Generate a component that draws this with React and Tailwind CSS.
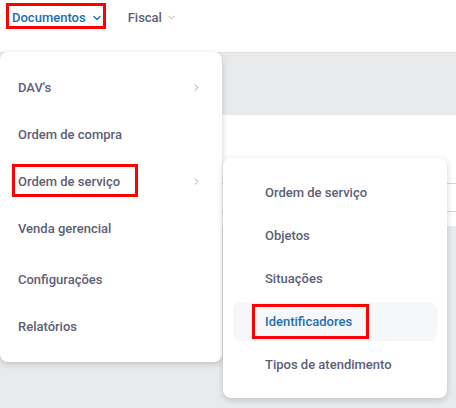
import { ChevronDown, ChevronRight } from "lucide-react";

const MAIN = [
  { label: "DAV's", sub: true },
  { label: "Ordem de compra" },
  { label: "Ordem de serviço", sub: true, marked: true },
  { label: "Venda gerencial", tall: true },
  { label: "Configurações" },
  { label: "Relatórios" },
];

const SERVICE = [
  { label: "Ordem de serviço" },
  { label: "Objetos" },
  { label: "Situações" },
  { label: "Identificadores", active: true },
  { label: "Tipos de atendimento" },
];

function MainMenu() {
  return (
    <div className="absolute left-0 top-[52px] w-[222px] rounded-lg bg-white pt-3 pb-[12px] shadow-[0_2px_6px_rgba(0,0,0,0.18)]">
      {MAIN.map((item) => (
        <div
          key={item.label}
          className={
            "relative flex items-center justify-between pl-[18px] pr-[20px] " +
            (item.tall ? "h-[51px] pb-[4px]" : "h-[47px]")
          }
        >
          <span className="text-[13px] font-medium text-[#5d6075]">{item.label}</span>
          {item.sub && <ChevronRight className="h-[11px] w-[11px] text-[#9b9db0]" strokeWidth={2} />}
          {item.marked && (
            <span className="pointer-events-none absolute left-[12px] top-[6px] h-[33px] w-[126px] border-[3px] border-[#ff0000]" />
          )}
        </div>
      ))}
    </div>
  );
}

function ServiceMenu() {
  return (
    <div className="absolute left-[223px] top-[158px] w-[224px] rounded-lg bg-white px-[10px] pt-[13px] pb-[12px] shadow-[0_2px_6px_rgba(0,0,0,0.18)]">
      {SERVICE.map((item) => (
        <div key={item.label} className="flex h-[43px] items-center">
          <div
            className={
              "relative flex h-[39px] w-full items-center rounded-lg pl-[32px] " +
              (item.active ? "bg-[#f6f7f8]" : "")
            }
          >
            <span className={"text-[13px] font-medium " + (item.active ? "text-[#1f6fb2]" : "text-[#5d6075]")}>
              {item.label}
            </span>
            {item.active && (
              <span className="pointer-events-none absolute left-[19px] top-[2px] h-[35px] w-[117px] border-[3px] border-[#ff0000]" />
            )}
          </div>
        </div>
      ))}
    </div>
  );
}

export default function App() {
  return (
    <div className="relative h-[408px] w-[456px] overflow-hidden bg-[#e8eaeb] font-['Roboto',sans-serif]">
      {/* top nav */}
      <div className="flex h-[52px] items-start bg-white pl-[12px] pt-[8px]">
        <div className="relative flex items-center gap-[5px]">
          <span className="text-[13px] font-medium text-[#1b6db5]">Documentos</span>
          <ChevronDown className="h-[12px] w-[12px] text-[#1b6db5]" strokeWidth={2.5} />
          <span className="pointer-events-none absolute -left-[6px] -top-[5px] h-[26px] w-[100px] border-[3px] border-[#ff0000]" />
        </div>
        <div className="ml-[25px] flex items-center gap-[4px]">
          <span className="text-[13px] font-medium text-[#5d6075]">Fiscal</span>
          <ChevronDown className="h-[11px] w-[11px] text-[#a3a5b5]" strokeWidth={2} />
        </div>
      </div>

      {/* page behind the menus */}
      <div className="h-[63px] border-t border-[#e0e2e3] bg-[#e8eaeb]" />
      <div className="flex h-[111px] flex-col bg-white">
        <div className="h-[68px]" />
        <div className="h-[29px] border-y border-[#d6d6de]" />
      </div>

      <MainMenu />
      <ServiceMenu />
    </div>
  );
}
